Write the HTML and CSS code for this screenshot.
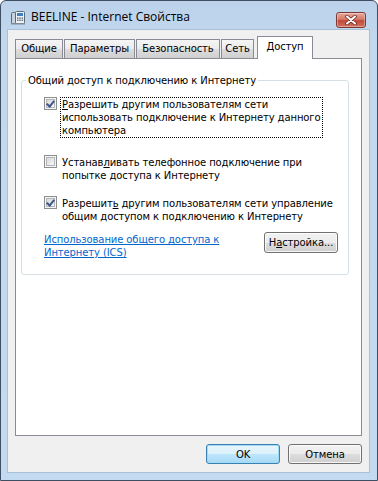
FILE: index.html
```html
<!DOCTYPE html>
<html lang="ru">
<head>
  <meta charset="UTF-8" />
  <title>BEELINE - Internet Свойства</title>
  <link rel="stylesheet" href="styles.css">
</head>
<body>
  <div class="window">
    <div class="titlebar">
      <svg class="app-icon" width="16" height="16" viewBox="0 0 16 16">
        <rect x="1.5" y="3.5" width="4" height="11" rx="1" fill="#c9d3dc" stroke="#5c6a78"/>
        <rect x="5.5" y="2.5" width="9" height="12" rx="1" fill="#eef2f5" stroke="#5c6a78"/>
        <rect x="7" y="4" width="6" height="3" fill="#3f7fc4"/>
        <rect x="7" y="8.5" width="1.5" height="1.2" fill="#4a5866"/>
        <rect x="9.3" y="8.5" width="1.5" height="1.2" fill="#4a5866"/>
        <rect x="11.6" y="8.5" width="1.5" height="1.2" fill="#4a5866"/>
        <rect x="7" y="10.6" width="1.5" height="1.2" fill="#4a5866"/>
        <rect x="9.3" y="10.6" width="1.5" height="1.2" fill="#4a5866"/>
        <rect x="11.6" y="10.6" width="1.5" height="1.2" fill="#4a5866"/>
        <rect x="1" y="14" width="14" height="1.5" fill="#7d8a97"/>
      </svg>
      <span class="title">BEELINE - Internet Свойства</span>
      <div class="close">
        <svg width="14" height="10" viewBox="0 0 14 10">
          <path d="M3 1.5 L11 8.5 M11 1.5 L3 8.5" stroke="#6b2a22" stroke-width="3.6" stroke-linecap="round"/>
          <path d="M3 1.5 L11 8.5 M11 1.5 L3 8.5" stroke="#ffffff" stroke-width="2" stroke-linecap="round"/>
        </svg>
      </div>
    </div>

    <div class="client">
      <div class="tabs">
        <div class="tab tab-general">Общие</div>
        <div class="tab tab-options">Параметры</div>
        <div class="tab tab-security">Безопасность</div>
        <div class="tab tab-network">Сеть</div>
        <div class="tab tab-sharing active">Доступ</div>
      </div>

      <div class="panel">
        <fieldset class="group">
          <legend>Общий доступ к подключению к Интернету</legend>

          <div class="check-row row-allow">
            <span class="box checked"></span>
            <span class="label focused"><u>Р</u>азрешить другим пользователям сети<br>использовать подключение к Интернету данного<br>компьютера</span>
          </div>

          <div class="check-row row-dial">
            <span class="box"></span>
            <span class="label">Устанав<u>л</u>ивать телефонное подключение при<br>попытке доступа к Интернету</span>
          </div>

          <div class="check-row row-manage">
            <span class="box checked"></span>
            <span class="label">Разрешит<u>ь</u> другим пользователям сети управление<br>общим доступом к подключению к Интернету</span>
          </div>

          <div class="link-row">
            <a href="#" class="link">Использование общего доступа к<br>Интернету (ICS)</a>
            <button class="btn settings">Н<u>а</u>стройка...</button>
          </div>
        </fieldset>
      </div>

      <div class="buttons">
        <button class="btn default">OK</button>
        <button class="btn">Отмена</button>
      </div>
    </div>
  </div>
</body>
</html>
```

FILE: styles.css
```css
body {
  margin: 0;
  font-family: "DejaVu Sans", Verdana, sans-serif;
  font-size: 10px;
  letter-spacing: -0.1px;
  color: #000;
  background: #fff;
}

.window {
  width: 378px;
  height: 481px;
  box-sizing: border-box;
  border: 1px solid #3e4f63;
  border-radius: 6px 6px 0 0;
  background: linear-gradient(#bcd2ea, #c2d8ef 40px, #c4daf1);
  padding: 0 8px 8px 7px;
  display: flex;
  flex-direction: column;
}

.titlebar {
  height: 29px;
  display: flex;
  align-items: center;
  padding-left: 2px;
}

.app-icon {
  margin-top: 2px;
}

.title {
  margin-left: 5px;
  margin-top: 2px;
  font-family: "Open Sans", "Noto Sans", sans-serif;
  font-size: 12px;
  letter-spacing: 0;
  color: #000;
}

.close {
  margin-left: auto;
  margin-right: 3px;
  margin-top: 8px;
  width: 28px;
  height: 14px;
  border: 1px solid #7a3a33;
  border-radius: 3px;
  background: linear-gradient(#e9a99c, #d47a69 45%, #c2483a 55%, #d3705d);
  display: flex;
  align-items: center;
  justify-content: center;
  box-shadow: inset 0 0 0 1px rgba(255,255,255,0.35);
}

.client {
  flex: 1;
  background: #f0f0f0;
  padding: 6px 7px 0 7px;
  display: flex;
  flex-direction: column;
  box-shadow: 0 0 0 1px #a9c0da;
}

.tabs {
  display: flex;
  align-items: flex-start;
  height: 23px;
  position: relative;
  z-index: 1;
}

.tab {
  flex: none;
  margin-top: 3px;
  height: 19px;
  box-sizing: border-box;
  border: 1px solid #898c95;
  border-bottom: none;
  background: linear-gradient(#f5f5f5, #ebebeb 50%, #dddddd 51%, #cfcfcf);
  padding-top: 3px;
  margin-right: 1px;
  text-align: center;
  white-space: nowrap;
}

.tab-general { width: 48px; }
.tab-options { width: 71px; }
.tab-security { width: 84px; }
.tab-network { width: 33px; }
.tab-sharing { width: 56px; }

.tab.active {
  margin-top: 0;
  height: 23px;
  background: #fff;
  padding-top: 4px;
  margin-left: 2px;
}

.panel {
  margin-top: -1px;
  height: 378px;
  box-sizing: border-box;
  border: 1px solid #898c95;
  background: #fff;
  padding: 15px 12px 0 5px;
}

.group {
  margin: 0;
  min-width: 0;
  border: 1px solid #d5dfe5;
  border-radius: 3px;
  padding: 10px 8px 15px 22px;
}

.group legend {
  padding: 0 2px;
  margin-left: -18px;
  line-height: 13px;
}

.check-row {
  display: flex;
  align-items: flex-start;
}

.row-dial {
  margin-top: 17px;
}

.row-manage {
  margin-top: 13px;
}

.box {
  width: 13px;
  height: 13px;
  box-sizing: border-box;
  border: 1px solid #8e8f8f;
  background: #f4f4f4;
  flex: none;
  position: relative;
  margin-right: 3px;
}

.box::before {
  content: "";
  position: absolute;
  left: 1px;
  top: 1px;
  width: 9px;
  height: 9px;
  box-sizing: border-box;
  border: 1px solid #b4b8bd;
  background: linear-gradient(135deg, #d8d8d8, #f7f7f7);
}

.box.checked::after {
  content: "";
  position: absolute;
  left: 3px;
  top: 1px;
  width: 3px;
  height: 6px;
  border: solid #3f5589;
  border-width: 0 2px 2px 0;
  transform: rotate(40deg);
}

.label {
  line-height: 13px;
  border: 1px dotted transparent;
  padding: 0 1px;
  white-space: nowrap;
}

.label.focused {
  border-color: #000;
}

.link-row {
  margin-top: 8px;
  display: flex;
  align-items: flex-start;
  justify-content: space-between;
}

.link {
  color: #0066cc;
  line-height: 13px;
  margin-top: 1px;
  white-space: nowrap;
}

.btn {
  font-family: inherit;
  font-size: 10px;
  letter-spacing: -0.1px;
  height: 21px;
  border: 1px solid #707070;
  border-radius: 3px;
  background: linear-gradient(#f2f2f2, #ebebeb 50%, #dddddd 51%, #cfcfcf);
  box-shadow: inset 0 0 0 1px rgba(255,255,255,0.8);
  padding: 0;
  color: #000;
}

.settings {
  width: 74px;
  margin-right: 2px;
}

.buttons {
  margin-top: 8px;
  display: flex;
  justify-content: flex-end;
  gap: 8px;
}

.buttons .btn {
  width: 74px;
  height: 20px;
}

.btn.default {
  border-color: #3c7fb1;
  background: linear-gradient(#eaf6fd, #d9f0fc 50%, #bee6fd 51%, #a7d9f5);
  box-shadow: inset 0 0 0 1px #9fdcf7;
}
```
